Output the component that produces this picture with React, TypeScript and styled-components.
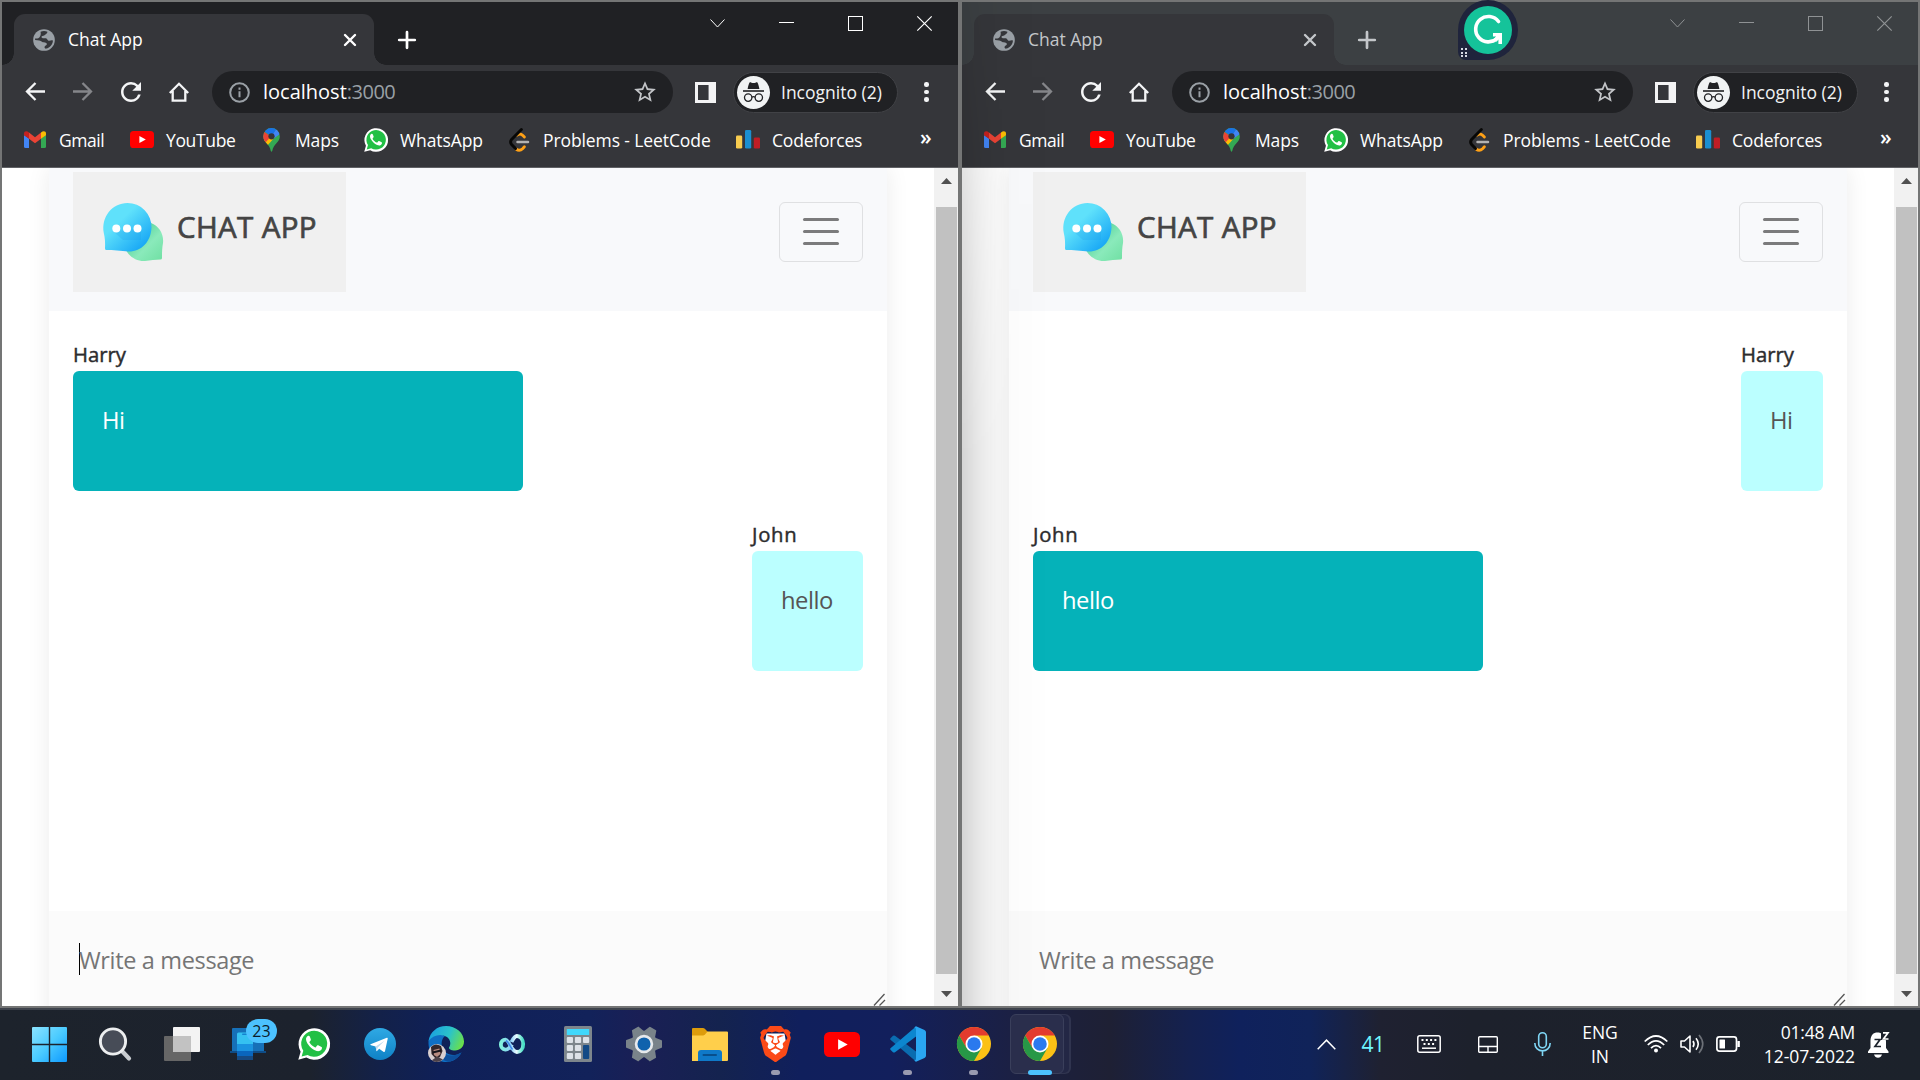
import React from "react";
import styled, { createGlobalStyle, css } from "styled-components";
import { MdStarBorder, MdRefresh } from "react-icons/md";
import { SiBrave } from "react-icons/si";

const GlobalStyle = createGlobalStyle`
  * { box-sizing: border-box; }
  body {
    margin: 0;
    background: #1c212b;
    font-family: "Open Sans", "Noto Sans", sans-serif;
    overflow: hidden;
  }
  svg { display: block; flex: none; overflow: visible; }
`;

/* ---------- desktop ---------- */

const Desktop = styled.div`
  position: relative;
  width: 1920px;
  height: 1080px;
  display: flex;
  flex-direction: column;
  overflow: hidden;
`;

const Windows = styled.div`
  display: flex;
  height: 1008px;
`;

const Window = styled.section`
  position: relative;
  width: 960px;
  height: 1008px;
  display: flex;
  flex-direction: column;
  border: 2px solid #747575;
  background: #35363a;
`;

const NeighbourShadow = styled.div`
  position: absolute;
  top: 0;
  left: 0;
  width: 90px;
  height: 1004px;
  pointer-events: none;
  background: linear-gradient(90deg, rgba(0, 0, 0, 0.17), rgba(0, 0, 0, 0.09) 17px, rgba(0, 0, 0, 0.035) 36px, rgba(0, 0, 0, 0.01) 50px, transparent);
  mask-image: linear-gradient(180deg, rgba(0, 0, 0, 0.35), rgba(0, 0, 0, 0.75) 200px, #000 460px);
`;

/* ---------- browser chrome ---------- */

const TabStrip = styled.div<{ $active: boolean }>`
  display: flex;
  height: 63px;
  padding: 12px 0 0 12px;
  background: ${(p) => (p.$active ? "#202124" : "#3c4043")};
  color: ${(p) => (p.$active ? "#ffffff" : "#c4c7ca")};
`;

const Tab = styled.div`
  position: relative;
  display: flex;
  align-items: center;
  width: 360px;
  height: 51px;
  padding: 0 18px 0 19px;
  border-radius: 11px 11px 0 0;
  background: #35363a;

  &::before,
  &::after {
    content: "";
    position: absolute;
    bottom: 0;
    width: 12px;
    height: 12px;
  }
  &::before {
    left: -12px;
    background: radial-gradient(circle at 0 0, transparent 11.5px, #35363a 12px);
  }
  &::after {
    right: -12px;
    background: radial-gradient(circle at 100% 0, transparent 11.5px, #35363a 12px);
  }
`;

const Label = styled.span<{ $size?: number; $spacing?: number }>`
  font-size: ${(p) => p.$size ?? 17.5}px;
  letter-spacing: ${(p) => p.$spacing ?? 0}px;
  line-height: 24px;
  white-space: nowrap;
`;

const TabTitle = styled(Label)`
  flex: 1;
  margin: -2px 0 0 13px;
`;

const NewTab = styled.div`
  display: flex;
  align-items: center;
  height: 51px;
  margin-left: 24px;
`;

const WindowButtons = styled.div<{ $active: boolean }>`
  display: flex;
  height: 42px;
  margin: -12px 0 0 auto;
  color: ${(p) => (p.$active ? "#ffffff" : "#8f9294")};
`;

const WindowButton = styled.div`
  display: flex;
  align-items: center;
  justify-content: center;
  width: 69px;
  &:last-child {
    width: 68px;
  }
`;

const Toolbar = styled.div`
  display: flex;
  align-items: center;
  height: 54px;
  padding-left: 9px;
  color: #f1f3f4;
`;

const NavButton = styled.div<{ $dim?: boolean }>`
  display: flex;
  align-items: center;
  justify-content: center;
  width: 48px;
  padding-bottom: 1px;
  color: ${(p) => (p.$dim ? "#85868a" : "#f4f5f6")};
`;

const Omnibox = styled.div`
  display: flex;
  align-items: center;
  width: 461px;
  height: 42px;
  margin-left: 9px;
  padding: 0 15px 0 17px;
  border-radius: 21px;
  background: #202124;
`;

const Address = styled.div`
  flex: 1;
  margin-left: 13px;
  font-size: 20px;
  line-height: 24px;
  color: #fff;
`;

const Port = styled.span`
  color: #9aa0a6;
  letter-spacing: -0.5px;
`;

const SidePanelIcon = styled.div`
  width: 21px;
  height: 21px;
  margin-left: 22px;
  border: 3px solid #f4f4f5;
  border-right-width: 7px;
  background: linear-gradient(90deg, #35363a 10px, #85868a 10px);
`;

const ProfileChip = styled.div`
  display: flex;
  align-items: center;
  width: 165px;
  height: 41px;
  margin-left: 17px;
  padding-left: 3px;
  border: 1px solid #414246;
  border-radius: 21px;
  background: #202124;
`;

const Avatar = styled.div`
  display: flex;
  align-items: center;
  justify-content: center;
  width: 33px;
  height: 33px;
  margin-right: 11px;
  border-radius: 50%;
  background: #f1f3f4;
`;

const ProfileName = styled(Label)`
  margin-top: -1px;
`;

const Kebab = styled.div`
  display: flex;
  flex-direction: column;
  gap: 3px;
  margin-left: 26px;
`;

const KebabDot = styled.i`
  width: 4.5px;
  height: 4.5px;
  border-radius: 50%;
  background: #f4f5f6;
`;

const Bookmarks = styled.div`
  display: flex;
  align-items: center;
  height: 49px;
  padding: 0 0 7px 21px;
  border-bottom: 1px solid #606165;
  color: #fff;
`;

const Bookmark = styled.div<{ $width: number }>`
  display: flex;
  align-items: center;
  gap: 12px;
  width: ${(p) => p.$width}px;
`;

const BookmarkIcon = styled.div`
  display: flex;
  align-items: center;
  justify-content: center;
  width: 24px;
  height: 24px;
`;

const Overflow = styled(Label)`
  margin: -5px 0 0 2px;
  font-weight: 600;
`;

/* ---------- page ---------- */

const Page = styled.div`
  display: flex;
  height: 838px;
  overflow: hidden;
  background: #fff;
`;

const PageBody = styled.div`
  width: 932px;
  padding-left: 47px;
`;

const Card = styled.div`
  width: 838px;
  height: 900px;
  background: #fff;
  box-shadow: 0 0 22px rgba(0, 0, 0, 0.08);
`;

const CardHeader = styled.header`
  display: flex;
  justify-content: space-between;
  height: 143px;
  padding: 4px 24px 0;
  background: #f8f9fb;
`;

const Brand = styled.div`
  display: flex;
  width: 273px;
  height: 120px;
  padding: 30px 0 0 30px;
  background: #f0f0f0;
`;

const BrandName = styled.span`
  margin-left: 13px;
  font-size: 29.5px;
  line-height: 50px;
  letter-spacing: 0.35px;
  color: #444;
  white-space: nowrap;
  -webkit-text-stroke: 0.7px #444;
`;

const MenuToggle = styled.div`
  display: flex;
  flex-direction: column;
  align-items: center;
  justify-content: center;
  gap: 9px;
  width: 84px;
  height: 60px;
  margin-top: 30px;
  padding-bottom: 1px;
  border: 1px solid #dfe0e2;
  border-radius: 6px;
`;

const ToggleBar = styled.i`
  width: 36px;
  height: 3px;
  border-radius: 1.5px;
  background: #7b7b7c;
`;

const Messages = styled.div`
  display: flex;
  flex-direction: column;
  gap: 24px;
  height: 600px;
  padding: 24px;
`;

const Message = styled.div<{ $own: boolean }>`
  align-self: ${(p) => (p.$own ? "flex-end" : "flex-start")};
`;

const Sender = styled.div<{ $spacing: number }>`
  height: 36px;
  font-size: 20.3px;
  line-height: 38px;
  letter-spacing: ${(p) => p.$spacing}px;
  color: #2c2c2e;
  -webkit-text-stroke: 0.45px #2c2c2e;
`;

const Bubble = styled.div<{ $own: boolean; $width: number }>`
  width: ${(p) => p.$width}px;
  height: 120px;
  padding: 31px 0 0 29px;
  border-radius: 6px;
  font-size: 23.8px;
  line-height: 37px;
  letter-spacing: -0.5px;
  ${(p) =>
    p.$own
      ? css`
          background: #bbffff;
          color: #555;
        `
      : css`
          background: #05b2b9;
          color: #fff;
        `}
`;

const Composer = styled.div`
  display: flex;
  align-items: flex-start;
  justify-content: space-between;
  height: 95px;
  padding: 32px 1px 0 30px;
  background: #fbfbfb;
`;

const Placeholder = styled.div<{ $focused: boolean }>`
  height: 32px;
  border-left: 1px solid ${(p) => (p.$focused ? "#000" : "transparent")};
  font-size: 23.5px;
  line-height: 35px;
  letter-spacing: -0.35px;
  text-indent: -1px;
  color: #757575;
`;

const ResizeHandle = styled.div`
  align-self: flex-end;
`;

const Scrollbar = styled.div`
  display: flex;
  flex-direction: column;
  align-items: center;
  justify-content: space-between;
  width: 24px;
  height: 838px;
  padding: 10px 0 9px;
  background: #f1f1f1;
`;

const Thumb = styled.div`
  width: 21px;
  height: 767px;
  margin-top: 6px;
  background: #c1c1c1;
`;

const Arrow = styled.i<{ $down?: boolean }>`
  width: 11px;
  height: 6px;
  margin-left: 1px;
  background: #505050;
  clip-path: ${(p) => (p.$down ? "polygon(0 0, 100% 0, 50% 100%)" : "polygon(50% 0, 100% 100%, 0 100%)")};
`;

/* ---------- taskbar ---------- */

const Taskbar = styled.footer`
  display: flex;
  height: 72px;
  padding: 0 17px 0 16px;
  border-top: 2px solid #3e434c;
  color: #fff;
  background: linear-gradient(
    90deg,
    #1d232c 0,
    #1c222d 310px,
    #132149 380px,
    #0f2058 440px,
    #12225a 590px,
    #1a1f55 640px,
    #14234f 720px,
    #101f5c 800px,
    #121f5c 890px,
    #1b2044 1010px,
    #1e2034 1110px,
    #142150 1190px,
    #0f215c 1240px,
    #102359 1310px,
    #1f2131 1380px,
    #1d212c 1470px,
    #1c222b 1920px
  );
`;

const TaskItem = styled.div`
  position: relative;
  display: flex;
  align-items: center;
  justify-content: center;
  width: 66px;
  height: 69px;
  padding: 0 0 1px 1px;
`;

const ActiveTile = styled.div`
  position: absolute;
  left: 4px;
  top: 4px;
  width: 54px;
  height: 60px;
  border: 1px solid #3a3f5b;
  border-radius: 6px;
  background: #2a2e4c;
  box-shadow: 6px 0 0 -1px #232745, 7px 0 0 0 #30344f;
`;

const Indicator = styled.i<{ $active?: boolean }>`
  position: absolute;
  bottom: 4px;
  width: ${(p) => (p.$active ? 24 : 9)}px;
  height: 5px;
  border-radius: 3px;
  background: ${(p) => (p.$active ? "#4cc2ff" : "#9a9bb0")};
`;

const Badge = styled.span`
  position: absolute;
  left: 32px;
  top: 9px;
  width: 31px;
  height: 24px;
  border-radius: 12px;
  background: #4cc2ff;
  color: #0b1c2b;
  font-size: 16px;
  line-height: 24px;
  text-align: center;
`;

const Layer = styled.div`
  position: relative;
`;

const Tray = styled.div`
  display: flex;
  align-items: center;
  height: 68px;
  margin-left: auto;
`;

const TrayCell = styled.div<{ $width: number; $color?: string }>`
  display: flex;
  align-items: center;
  justify-content: center;
  width: ${(p) => p.$width}px;
  color: ${(p) => p.$color ?? "#fff"};
`;

const TrayLines = styled.div<{ $width: number; $end?: boolean }>`
  display: flex;
  flex-direction: column;
  align-items: ${(p) => (p.$end ? "flex-end" : "center")};
  width: ${(p) => p.$width}px;
  padding-bottom: 1px;
`;

/* ---------- floating badge ---------- */

const AssistantBadge = styled.div`
  position: absolute;
  left: 1458px;
  top: 0;
  width: 60px;
  height: 60px;
  padding: 6px;
  border-radius: 30px 30px 30px 8px;
  background: #1f243c;
`;

const DragDots = styled.div`
  position: absolute;
  left: 3px;
  bottom: 3px;
  display: grid;
  grid-template-columns: 2px 2px;
  gap: 1.5px 2px;
`;

const DragDot = styled.i`
  width: 2px;
  height: 2px;
  background: #d6d8e2;
`;

/* ---------- drawings ---------- */

const GlobeIcon = () => (
  <svg width="22" height="22" viewBox="0 0 64 64">
    <circle cx="32" cy="32" r="31.5" fill="#9aa0a6" />
    <path fill="#35363a" d="M22 8 C28 5 36 5 42 8 C42 13 38 14 35 17 C32 21 28 19 25 22 C23 26 29 28 35 27 C42 27 41 32 45 34 C49 36 54 31 58 34 C57 45 49 54 39 57 C36 58 32 55 34 51 C36 47 42 47 40 42 C37 38 31 41 26 37 C22 33 16 34 6 32 C6 30 6 29 7 27 C10 29 17 27 19 24 C21 20 24 17 22 8 Z" />
  </svg>
);

const CloseIcon = () => (
  <svg width="12" height="12" viewBox="0 0 12 12" stroke="currentColor" strokeWidth="2.4" strokeLinecap="round">
    <path d="M1 1 L11 11 M11 1 L1 11" />
  </svg>
);

const PlusIcon = () => (
  <svg width="18" height="18" viewBox="0 0 18 18" stroke="currentColor" strokeWidth="2.7" strokeLinecap="round">
    <path d="M9 1.2 V16.8 M1.2 9 H16.8" />
  </svg>
);

const ArrowIcon = ({ flip }: { flip?: boolean }) => (
  <svg width="20" height="19" viewBox="0 0 20 19" fill="none" stroke="currentColor" strokeWidth="2.3" transform={flip ? "scale(-1 1)" : undefined}>
    <path d="M20 9.5 H2 M10.5 1 L2 9.5 L10.5 18" />
  </svg>
);

const HomeIcon = () => (
  <svg width="20" height="20" viewBox="0 0 20 20" fill="none" stroke="currentColor" strokeWidth="2.3">
    <path d="M0.8 11 L10 1.8 L19.2 11 M3.7 9 V18.7 H16.3 V9" />
  </svg>
);

const InfoIcon = () => (
  <svg width="21" height="21" viewBox="0 0 21 21" fill="none" stroke="#9aa0a6" strokeWidth="2">
    <circle cx="10.5" cy="10.5" r="9.3" />
    <path d="M10.5 9.3 V15.2 M10.5 5.6 V7.8" />
  </svg>
);

const IncognitoIcon = () => (
  <svg width="21" height="20" viewBox="0 0 21 20" fill="#202124">
    <path d="M6.6 0.4 C7.3 -0.2 8.6 1 10.5 1 C12.4 1 13.7 -0.2 14.4 0.4 C15.3 1.8 16 4.5 16.4 7 H4.6 C5 4.5 5.7 1.8 6.6 0.4 Z" />
    <rect x="0" y="8.2" width="21" height="1.6" />
    <g fill="none" stroke="#202124" strokeWidth="1.3">
      <circle cx="5.2" cy="15.6" r="3.7" />
      <circle cx="15.8" cy="15.6" r="3.7" />
      <path d="M8.9 15.2 Q10.5 14 12.1 15.2" />
    </g>
  </svg>
);

const GmailIcon = () => (
  <svg width="22" height="17" viewBox="0 0 22 17">
    <path fill="#4285f4" d="M0 4 L5 7.5 V17 H1.5 Q0 17 0 15.5 Z" />
    <path fill="#34a853" d="M22 4 L17 7.5 V17 H20.5 Q22 17 22 15.5 Z" />
    <path fill="#ea4335" d="M5 1.6 L11 6.2 L17 1.6 V7.8 L11 12.3 L5 7.8 Z" />
    <path fill="#c5221f" d="M0 2.6 C0 0.2 2.6 -0.6 5 1.6 V7.8 L0 4.2 Z" />
    <path fill="#fbbc04" d="M22 2.6 C22 0.2 19.4 -0.6 17 1.6 V7.8 L22 4.2 Z" />
  </svg>
);

const YouTubeIcon = ({ width, height }: { width: number; height: number }) => (
  <svg width={width} height={height} viewBox="0 0 24 17" preserveAspectRatio="none">
    <rect width="24" height="17" rx="3.6" fill="#f00" />
    <path fill="#fff" d="M9.4 4.9 L15.8 8.5 L9.4 12.1 Z" />
  </svg>
);

const MapsIcon = () => (
  <svg width="17" height="24" viewBox="0 0 17 24">
    <defs>
      <clipPath id="pin">
        <path d="M8.5 0 A8.3 8.3 0 0 1 16.8 8.4 C16.8 14 10.3 16 9.3 22.7 Q8.5 24.6 7.7 22.7 C6.7 16 0.2 14 0.2 8.4 A8.3 8.3 0 0 1 8.5 0 Z" />
      </clipPath>
    </defs>
    <g clipPath="url(#pin)">
      <rect width="17" height="24" fill="#34a853" />
      <path fill="#fbbc04" d="M0 14 L8.5 4 L13 8 L3 19 Z" />
      <path fill="#4285f4" d="M17 0 V6 L10 11 L8 8 L14 0 Z" />
      <path fill="#ea4335" d="M0 3 L8 8.4 L2 15 L0 14 Z" />
      <path fill="#1a73e8" d="M0 0 H14 L8.5 8.5 L1.5 3.6 Z" />
    </g>
    <circle cx="8.5" cy="8.3" r="3.1" fill="#35363a" />
  </svg>
);

const WhatsAppIcon = ({ size }: { size: number }) => (
  <svg width={size} height={size} viewBox="0 0 32 32">
    <path fill="#fff" d="M0.3 31.8 L2.6 23.8 A15.8 15.8 0 1 1 8.3 29.6 Z" />
    <path fill="#22c045" d="M3.6 28.5 L5.3 22.8 A13 13 0 1 1 9.6 26.9 Z" />
    <path
      fill="#fff"
      d="M11.8 8.6 c-.5-1-1.1-1-1.7-.8 c-1.5.7-2.3 2.2-2 4.3 c.6 3.8 5.6 9.6 10.6 11 c2.3.6 4.7-.6 5.2-2.6 c.2-1 .1-1.3-.4-1.6 l-3.3-1.6 c-.5-.2-.8-.1-1.1.3 l-1.3 1.6 c-.3.3-.6.3-1 .1 c-2.3-1-4-2.5-5.3-4.7 c-.3-.5 0-.8.3-1.1 c.6-.7 1.3-1.4 1-2.2 Z"
    />
  </svg>
);

const LeetCodeIcon = () => (
  <svg width="21" height="24" viewBox="0 0 21 24" fill="none" strokeLinecap="round" strokeWidth="2.9">
    <path stroke="#ffa116" d="M8 7.2 Q11 4.8 13.6 7.2 L15.4 9 M15.4 18.8 L13.6 20.7 Q10.5 23.8 7 21" />
    <path stroke="#070706" d="M12.4 1.5 L2.6 11.4 Q0.6 14 2.6 16.5 L6.5 20.6" />
    <path stroke="#b3b3b3" strokeWidth="2.5" d="M8.5 14 H19" />
  </svg>
);

const CodeforcesIcon = () => (
  <svg width="24" height="19" viewBox="0 0 24 19">
    <rect x="0" y="5.5" width="6.2" height="13" rx="1.3" fill="#f8cc4f" />
    <rect x="9" y="0" width="6.2" height="18.5" rx="1.3" fill="#1b8fd0" />
    <rect x="17.8" y="7.5" width="6.2" height="11" rx="1.3" fill="#c01d24" />
  </svg>
);

const ChatLogo = () => (
  <svg width="61" height="60" viewBox="0 0 61 60">
    <defs>
      <linearGradient id="bubbleBlue" x1="0.2" y1="0.15" x2="0.9" y2="0.9">
        <stop offset="0.25" stopColor="#5fe1fb" />
        <stop offset="1" stopColor="#14a4f5" />
      </linearGradient>
      <linearGradient id="bubbleGreen" x1="0.2" y1="0.2" x2="1" y2="1">
        <stop offset="0" stopColor="#4fcf98" />
        <stop offset="0.5" stopColor="#8aeabb" />
        <stop offset="1" stopColor="#6fdfa2" />
      </linearGradient>
    </defs>
    <path fill="url(#bubbleGreen)" d="M48 21 C56 24 61 32 60 41 C59 46 59 52 59 56 Q59 57.5 57.5 57.5 C53 57.5 47 58.5 42 59 C33 59.5 25 54 22 46 Z" />
    <path fill="url(#bubbleBlue)" d="M24.5 1 A24 24 0 0 1 48.5 25.5 C48 40 38 50 25 49.5 C19 49 9 48 3.5 48 Q2 48 2 46.5 C2.3 41 2 36 0.8 31 C-2 15 9 1 24.5 1 Z" />
    <path fill="#1897e6" opacity="0.18" d="M10 29 L20 38 L38 38 L38 27 Z" />
    <g fill="#fff">
      <circle cx="13.3" cy="26.5" r="4" />
      <circle cx="24" cy="26.5" r="4" />
      <circle cx="34.5" cy="26.5" r="4" />
    </g>
  </svg>
);

const StartIcon = () => (
  <svg width="35" height="35" viewBox="0 0 35 35">
    <defs>
      <linearGradient id="start" gradientUnits="userSpaceOnUse" x1="0" y1="0" x2="35" y2="35">
        <stop offset="0" stopColor="#8be3ff" />
        <stop offset="0.5" stopColor="#4bcbff" />
        <stop offset="1" stopColor="#0d99ff" />
      </linearGradient>
    </defs>
    <path fill="url(#start)" d="M0 1 Q0 0 1 0 H16.8 V16.8 H0 Z M18.2 0 H34 Q35 0 35 1 V16.8 H18.2 Z M0 18.2 H16.8 V35 H1 Q0 35 0 34 Z M18.2 18.2 H35 V34 Q35 35 34 35 H18.2 Z" />
  </svg>
);

const SearchIcon = () => (
  <svg width="33" height="34" viewBox="0 0 33 34">
    <path d="M23 24 L30 31.5" stroke="#c9cdd1" strokeWidth="4.2" strokeLinecap="round" />
    <circle cx="14" cy="14.5" r="12.6" fill="#474c57" stroke="#eceeef" strokeWidth="2.9" />
  </svg>
);

const TaskViewIcon = () => (
  <svg width="36" height="34" viewBox="0 0 36 34">
    <rect x="0" y="9" width="27" height="25" rx="1" fill="#666" />
    <rect x="9" y="0" width="27" height="25" rx="1" fill="#f3f3f3" />
    <path d="M9 9 H27 V25 H10 Q9 25 9 24 Z" fill="#c2c2c2" />
  </svg>
);

const PhoneLinkIcon = () => (
  <svg width="36" height="32" viewBox="0 0 36 32">
    <rect x="2" y="0" width="32" height="24" rx="1" fill="#1670b8" />
    <rect x="0" y="23" width="36" height="2" fill="#0f4c86" />
    <path d="M7 6 Q7 4.5 8.5 4.5 H21.5 Q23 4.5 23 6 V17 H7 Z" fill="#35c1f1" />
    <rect x="7" y="16" width="16" height="8" fill="#1a93e0" />
    <rect x="7" y="23" width="16" height="5" fill="#0a66bd" />
    <rect x="7" y="28" width="16" height="4" fill="#164a82" />
    <rect x="12" y="5.5" width="6" height="1.5" rx="0.7" fill="#1582cf" />
  </svg>
);

const TelegramIcon = () => (
  <svg width="32" height="32" viewBox="0 0 32 32">
    <defs>
      <linearGradient id="telegram" x1="0" y1="0" x2="0" y2="1">
        <stop offset="0" stopColor="#2fa9e4" />
        <stop offset="1" stopColor="#0f82c6" />
      </linearGradient>
    </defs>
    <circle cx="16" cy="16" r="16" fill="url(#telegram)" />
    <path fill="#fff" d="M6.5 16.3 L22.8 9.7 Q24 9.4 23.7 10.7 L21 23.3 Q20.6 24.5 19.4 23.8 L15.2 20.7 L13 23 Q12.4 23.4 12.3 22.6 L11.6 18.6 L7 17.2 Q5.9 16.8 6.5 16.3 Z" />
    <path fill="#bfdcf0" d="M11.6 18.6 L20.6 12.7 L13.8 19.6 L12.7 23 Z" />
  </svg>
);

const EdgeIcon = () => (
  <svg width="36" height="36" viewBox="0 0 36 36">
    <defs>
      <linearGradient id="edgeTop" x1="0" y1="0.3" x2="1" y2="0.6">
        <stop offset="0" stopColor="#1a9fe0" />
        <stop offset="0.55" stopColor="#2bc3c9" />
        <stop offset="1" stopColor="#6be04a" />
      </linearGradient>
    </defs>
    <path fill="#0f6fc4" d="M0.5 15 C3 9 11 7 17 10 C13 13 12 21 17 26 C22 30 28 30 33.5 26.5 C30 33 24 36 18 36 C7 36 0 27 0.5 15 Z" />
    <path fill="#0e4f9c" d="M14 20 C13 28 22 33 33.5 26.5 C29 35 20 38 14 33 Z" />
    <path fill="url(#edgeTop)" d="M0.5 15 C2 6 9 0 18 0 C28 0 36 7 36 15.5 C36 21 32 24.5 27 24.5 C23 24.5 20.5 23 21 21.5 C23 19 23 14 19 11 C13 7 5 9 0.5 15 Z" />
    <circle cx="9" cy="27" r="9" fill="#d9cfd0" />
    <path fill="#33262a" d="M3 21 Q7 16.5 13 20 L14.5 25 L12 31 L8 33 L3.5 28 Z" />
    <path fill="#b98c80" d="M5.5 24 L11.5 22.5 L12.5 28 L9 31 L6 29 Z" />
    <path stroke="#17151b" strokeWidth="1.8" d="M4.5 26.5 L13 24.5" />
    <path fill="#4d4249" d="M4 34.2 L9 30.5 L15 33.5 Q9 38 4 34.2 Z" />
  </svg>
);

const LoopIcon = () => (
  <svg width="26" height="20" viewBox="0 0 26 20" fill="none">
    <defs>
      <linearGradient id="loop" x1="0" y1="0" x2="1" y2="0">
        <stop offset="0" stopColor="#7ff0dc" />
        <stop offset="0.45" stopColor="#8fd0f8" />
        <stop offset="0.7" stopColor="#e9fbff" />
        <stop offset="1" stopColor="#49dfc4" />
      </linearGradient>
    </defs>
    <path stroke="url(#loop)" strokeWidth="3.8" d="M13 10.5 C10.5 14.5 8.5 15.8 6.3 15.6 C3.5 15.3 1.8 13 1.9 10.5 C2 7.5 4 5.6 6.5 5.7 C10.5 6 12 17.8 18 18 C22 18 24.2 14 24.2 10 C24.2 5.5 21.5 2 18 2 C15.5 2 14 5 12.5 8" />
    <path stroke="#3f86ea" strokeWidth="1.5" d="M7 6.5 C9.5 8 11 12.5 13.5 15.5" />
  </svg>
);

const CalculatorIcon = () => (
  <svg width="28" height="36" viewBox="0 0 28 36">
    <rect width="28" height="36" rx="1.5" fill="#7d868c" />
    <rect x="2.8" y="3" width="22.4" height="6" rx="0.5" fill="#40d8fb" />
    <g fill="#dde2e8">
      {[11, 19, 27].map((y) => [2.8, 10.9].map((x) => <rect key={`${x}-${y}`} x={x} y={y} width="6.2" height="6" rx="1" />))}
      <rect x="19" y="11" width="6.2" height="6" rx="1" />
    </g>
    <rect x="19" y="19" width="6.2" height="14" rx="1" fill="#134a86" />
  </svg>
);

const SettingsIcon = () => (
  <svg width="36" height="34" viewBox="0 0 36 34">
    <g fill="#79838a">
      <circle cx="18" cy="17" r="13.2" />
      {[0, 60, 120].map((a) => (
        <path key={a} transform={`rotate(${a} 18 17)`} d="M0.3 13 Q0 13 0 14 V20 Q0 21 1 21 L6 23 H30 L35 21 Q36 21 36 20 V14 Q36 13 35 13 L30 11 H6 Z" />
      ))}
    </g>
    <circle cx="18" cy="17" r="7.9" fill="#0f62ad" stroke="#e6e9ec" strokeWidth="2.7" />
  </svg>
);

const FolderIcon = () => (
  <svg width="36" height="33" viewBox="0 0 36 33">
    <path fill="#dd9c0b" d="M0 1 Q0 0 1 0 H11 Q12 0 12.8 0.8 L16 4 V8 H0 Z" />
    <path fill="#ffcf4b" d="M0 7.5 H11 Q12 7.5 12.8 6.8 L15.5 3.5 H35 Q36 3.5 36 4.5 V32 Q36 33 35 33 H0 Z" />
    <path fill="#0f79c8" d="M6 33 V25 Q6 22 9 22 H27 Q30 22 30 25 V33 Z" />
    <rect x="10.5" y="26" width="14.5" height="2" rx="1" fill="#084f8c" />
  </svg>
);

const BraveIcon = () => (
  <svg width="31" height="36" viewBox="1.7 0 20.6 24" preserveAspectRatio="none">
    <path fill="#fff" d="M6 5 H18 L19 11 L16 18 L12 21 L8 18 L5 11 Z" />
    <SiBrave size={24} color="#fb4a17" />
  </svg>
);

const CodeEditorIcon = () => (
  <svg width="36" height="36" viewBox="0 0 36 36">
    <path fill="#0a6cb0" d="M0.5 12.2 L3 9.8 Q4 9 5 9.8 L26 25.5 V35.5 L0.5 13.7 Q-0.3 13 0.5 12.2 Z" />
    <path fill="#0c86cf" d="M0.5 23.8 L3 26.2 Q4 27 5 26.2 L26 10.5 V0.5 L0.5 22.3 Q-0.3 23 0.5 23.8 Z" />
    <path fill="#2aa6f2" d="M26 0.3 L34.5 4 Q36 4.8 36 6.3 V29.7 Q36 31.2 34.5 32 L26 35.7 L24 34.5 Q26 35 26 32.5 V3.5 Q26 1 24 1.5 Z" />
  </svg>
);

const ChromeIcon = () => (
  <svg width="34" height="34" viewBox="2 2 92 92">
    <circle cx="48" cy="48" r="46" fill="#fbc116" />
    <path fill="#e33b2e" d="M8 25 A46 46 0 0 1 88 25 L48 25 L48 48 L28 59.5 Z" />
    <path fill="#279847" d="M8 25 L28 59.5 L48 48 L68 59.5 L48 94 A46 46 0 0 1 8 25 Z" />
    <circle cx="48" cy="48" r="23" fill="#fff" />
    <circle cx="48" cy="48" r="18.3" fill="#2a79ee" />
  </svg>
);

const ChevronUp = () => (
  <svg width="19" height="11" viewBox="0 0 19 11" fill="none" stroke="currentColor" strokeWidth="1.5">
    <path d="M0.7 10.3 L9.5 1.2 L18.3 10.3" />
  </svg>
);

const KeyboardIcon = () => (
  <svg width="24" height="18" viewBox="0 0 24 18" fill="none" stroke="currentColor" strokeWidth="1.5">
    <rect x="0.8" y="0.8" width="22.4" height="16.4" rx="2" />
    <path d="M4.5 5 H20" strokeWidth="2" strokeDasharray="2 2.3" />
    <path d="M6.5 9 H18" strokeWidth="2" strokeDasharray="2 2.3" />
    <path d="M5 13.2 H19" />
  </svg>
);

const TouchpadIcon = () => (
  <svg width="20" height="17" viewBox="0 0 20 17" fill="none" stroke="currentColor" strokeWidth="1.4">
    <rect x="0.7" y="0.7" width="18.6" height="15.6" rx="1" />
    <path d="M0.7 10.5 H19.3 M10 10.5 V16.3" />
  </svg>
);

const MicIcon = () => (
  <svg width="17" height="24" viewBox="0 0 17 24" fill="none" stroke="currentColor" strokeWidth="1.6">
    <rect x="4.7" y="0.8" width="7.6" height="15" rx="3.8" />
    <path d="M0.8 11 C0.8 21.5 16.2 21.5 16.2 11 M8.5 19 V24" />
  </svg>
);

const WifiIcon = () => (
  <svg width="24" height="18" viewBox="0 0 24 18" fill="none" stroke="currentColor" strokeWidth="1.7">
    <path d="M0.7 6.5 Q12 -4.5 23.3 6.5 M3.8 10 Q12 1.8 20.2 10 M7 13.2 Q12 8 17 13.2" />
    <circle cx="12" cy="15.5" r="2" fill="currentColor" stroke="none" />
  </svg>
);

const VolumeIcon = () => (
  <svg width="24" height="20" viewBox="0 0 24 20" fill="none" stroke="currentColor" strokeWidth="1.6">
    <path d="M1 7 H4.500 L10 2 V18 L4.500 13 H1 Z" strokeLinejoin="round" />
    <path d="M13 7 Q15 10 13 13 M16 4.300 Q20.500 10 16 15.700" />
    <path stroke="#6d7178" d="M19 1 Q26.500 10 19 19" />
  </svg>
);

const BatteryIcon = () => (
  <svg width="24" height="16" viewBox="0 0 24 16" fill="none" stroke="currentColor" strokeWidth="1.7">
    <rect x="0.9" y="0.9" width="19.6" height="14.2" rx="2.5" />
    <path d="M22.6 5 V11" strokeWidth="2.5" />
    <rect x="3.5" y="3.5" width="5.5" height="9" rx="0.5" fill="currentColor" stroke="none" />
  </svg>
);

const SnoozeBellIcon = () => (
  <svg width="22" height="26" viewBox="0 -3 22 26">
    <path fill="#fff" d="M9.5 -1.5 C13 -1.5 18 1 18 7.500 V14 L20.500 17.500 V19 H0 V17.500 L2.500 14 V7 C2.500 1 5.500 -1.500 9.500 -1.500 Z M6 20.500 H14 Q12.800 23.800 10 23.800 Q7.200 23.800 6 20.500 Z" />
    <rect x="13" y="-3.500" width="9" height="9.500" fill="#1c222b" />
    <path fill="none" stroke="#1c222b" strokeWidth="1.700" d="M6.500 5.500 H12 L7 12.500 H13" />
    <path fill="none" stroke="#fff" strokeWidth="1.700" d="M15 -1.200 H20 L15.500 5 H20.500" />
  </svg>
);

const AssistantIcon = () => (
  <svg width="48" height="48" viewBox="0 0 48 48">
    <circle cx="24" cy="24" r="24" fill="#15c39a" />
    <path fill="none" stroke="#fff" strokeWidth="3.6" strokeLinecap="round" d="M34.5 15.5 A12.7 12.7 0 1 0 33 32.5" />
    <path fill="none" stroke="#fff" strokeWidth="3.6" d="M29 28.8 H36.2 V38 M35.8 29 L31 34.5" />
  </svg>
);

const ResizeIcon = () => (
  <svg width="13" height="13" viewBox="0 0 13 13" stroke="#555" strokeWidth="1.3">
    <path d="M1 12.5 L11.5 1 M6.5 12.5 L12 7" />
  </svg>
);

/* ---------- composition ---------- */

type ChatMessage = { sender: string; spacing: number; text: string; own: boolean; width: number };

const bookmarks = [
  { label: "Gmail", width: 107, spacing: -0.45, icon: <GmailIcon /> },
  { label: "YouTube", width: 129, spacing: -0.35, icon: <YouTubeIcon width={24} height={17} /> },
  { label: "Maps", width: 105, spacing: -0.15, icon: <MapsIcon /> },
  { label: "WhatsApp", width: 143, spacing: -0.1, icon: <WhatsAppIcon size={24} /> },
  { label: "Problems - LeetCode", width: 229, spacing: -0.1, icon: <LeetCodeIcon /> },
  { label: "Codeforces", width: 182, spacing: -0.2, icon: <CodeforcesIcon /> },
];

function BrowserWindow({ active, messages }: { active: boolean; messages: ChatMessage[] }) {
  return (
    <Window>
      <TabStrip $active={active}>
        <Tab>
          <GlobeIcon />
          <TabTitle>Chat App</TabTitle>
          <CloseIcon />
        </Tab>
        <NewTab>
          <PlusIcon />
        </NewTab>
        <WindowButtons $active={active}>
          <WindowButton>
            <svg width="15" height="9" viewBox="0 0 15 9" fill="none" stroke="currentColor" strokeWidth="1">
              <path d="M0.5 0.5 L7.5 8 L14.5 0.5" />
            </svg>
          </WindowButton>
          <WindowButton>
            <svg width="15" height="3" viewBox="0 0 15 3" fill="currentColor">
              <rect y="0" width="15" height="1" />
            </svg>
          </WindowButton>
          <WindowButton>
            <svg width="15" height="15" viewBox="0 0 15 15" fill="none" stroke="currentColor">
              <rect x="0.5" y="0.5" width="14" height="14" />
            </svg>
          </WindowButton>
          <WindowButton>
            <svg width="15" height="15" viewBox="0 0 15 15" fill="none" stroke="currentColor" strokeWidth="1.2">
              <path d="M0.3 0.3 L14.7 14.7 M14.7 0.3 L0.3 14.7" />
            </svg>
          </WindowButton>
        </WindowButtons>
      </TabStrip>

      <Toolbar>
        <NavButton>
          <ArrowIcon />
        </NavButton>
        <NavButton $dim>
          <ArrowIcon flip />
        </NavButton>
        <NavButton>
          <MdRefresh size={30} />
        </NavButton>
        <NavButton>
          <HomeIcon />
        </NavButton>
        <Omnibox>
          <InfoIcon />
          <Address>
            localhost<Port>:3000</Port>
          </Address>
          <MdStarBorder size={26} color="#c3c5c8" />
        </Omnibox>
        <SidePanelIcon />
        <ProfileChip>
          <Avatar>
            <IncognitoIcon />
          </Avatar>
          <ProfileName>Incognito (2)</ProfileName>
        </ProfileChip>
        <Kebab>
          <KebabDot />
          <KebabDot />
          <KebabDot />
        </Kebab>
      </Toolbar>

      <Bookmarks>
        {bookmarks.map((b) => (
          <Bookmark key={b.label} $width={b.width}>
            <BookmarkIcon>{b.icon}</BookmarkIcon>
            <Label $spacing={b.spacing}>{b.label}</Label>
          </Bookmark>
        ))}
        <Overflow $size={21}>»</Overflow>
      </Bookmarks>

      <Page>
        <PageBody>
          <Card>
            <CardHeader>
              <Brand>
                <ChatLogo />
                <BrandName>CHAT APP</BrandName>
              </Brand>
              <MenuToggle>
                <ToggleBar />
                <ToggleBar />
                <ToggleBar />
              </MenuToggle>
            </CardHeader>
            <Messages>
              {messages.map((m) => (
                <Message key={m.sender} $own={m.own}>
                  <Sender $spacing={m.spacing}>{m.sender}</Sender>
                  <Bubble $own={m.own} $width={m.width}>
                    {m.text}
                  </Bubble>
                </Message>
              ))}
            </Messages>
            <Composer>
              <Placeholder $focused={active}>Write a message</Placeholder>
              <ResizeHandle>
                <ResizeIcon />
              </ResizeHandle>
            </Composer>
          </Card>
        </PageBody>
        <Scrollbar>
          <Arrow />
          <Thumb />
          <Arrow $down />
        </Scrollbar>
      </Page>
      {!active && <NeighbourShadow />}
    </Window>
  );
}

const taskItems: { icon: React.ReactNode; badge?: string; running?: boolean }[] = [
  { icon: <StartIcon /> },
  { icon: <SearchIcon /> },
  { icon: <TaskViewIcon /> },
  { icon: <PhoneLinkIcon />, badge: "23" },
  { icon: <WhatsAppIcon size={32} /> },
  { icon: <TelegramIcon /> },
  { icon: <EdgeIcon /> },
  { icon: <LoopIcon /> },
  { icon: <CalculatorIcon /> },
  { icon: <SettingsIcon /> },
  { icon: <FolderIcon /> },
  { icon: <BraveIcon />, running: true },
  { icon: <YouTubeIcon width={36} height={25} /> },
  { icon: <CodeEditorIcon />, running: true },
  { icon: <ChromeIcon />, running: true },
];

export default function App() {
  return (
    <Desktop>
      <GlobalStyle />
      <Windows>
        <BrowserWindow
          active
          messages={[
            { sender: "Harry", spacing: 0, text: "Hi", own: false, width: 450 },
            { sender: "John", spacing: 0.7, text: "hello", own: true, width: 111 },
          ]}
        />
        <BrowserWindow
          active={false}
          messages={[
            { sender: "Harry", spacing: 0, text: "Hi", own: true, width: 82 },
            { sender: "John", spacing: 0.7, text: "hello", own: false, width: 450 },
          ]}
        />
      </Windows>
      <Taskbar>
        {taskItems.map((item, i) => (
          <TaskItem key={i}>
            {item.icon}
            {item.badge && <Badge>{item.badge}</Badge>}
            {item.running && <Indicator />}
          </TaskItem>
        ))}
        <TaskItem>
          <ActiveTile />
          <Layer>
            <ChromeIcon />
          </Layer>
          <Indicator $active />
        </TaskItem>
        <Tray>
          <TrayCell $width={48}>
            <ChevronUp />
          </TrayCell>
          <TrayCell $width={46} $color="#6ff6ff">
            <Label $size={21} $spacing={-0.5}>
              41
            </Label>
          </TrayCell>
          <TrayCell $width={66}>
            <KeyboardIcon />
          </TrayCell>
          <TrayCell $width={52}>
            <TouchpadIcon />
          </TrayCell>
          <TrayCell $width={56} $color="#7fd6f5">
            <MicIcon />
          </TrayCell>
          <TrayLines $width={60}>
            <Label>ENG</Label>
            <Label>IN</Label>
          </TrayLines>
          <TrayCell $width={52}>
            <WifiIcon />
          </TrayCell>
          <TrayCell $width={20}>
            <VolumeIcon />
          </TrayCell>
          <TrayCell $width={52}>
            <BatteryIcon />
          </TrayCell>
          <TrayLines $width={101} $end>
            <Label $spacing={-0.2}>01:48 AM</Label>
            <Label>12-07-2022</Label>
          </TrayLines>
          <TrayCell $width={48}>
            <SnoozeBellIcon />
          </TrayCell>
        </Tray>
      </Taskbar>
      <AssistantBadge>
        <AssistantIcon />
        <DragDots>
          {[0, 1, 2, 3, 4, 5].map((n) => (
            <DragDot key={n} />
          ))}
        </DragDots>
      </AssistantBadge>
    </Desktop>
  );
}
